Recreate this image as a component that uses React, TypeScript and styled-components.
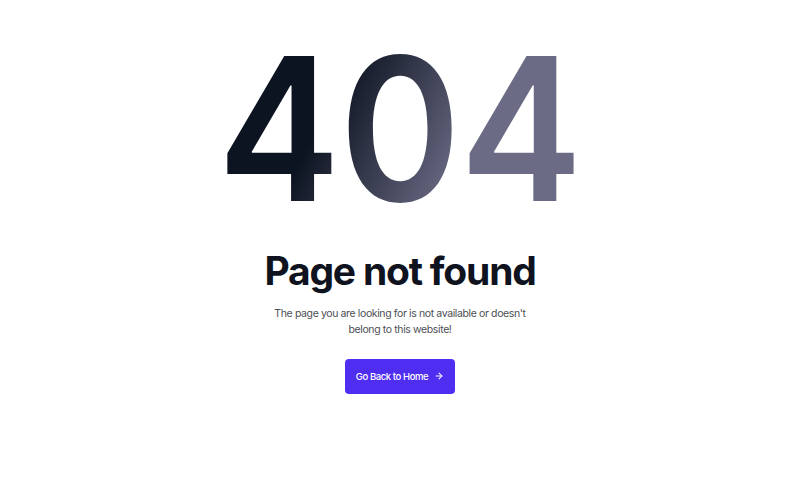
import * as React from 'react'
import styled, { createGlobalStyle } from 'styled-components'

const GlobalStyle = createGlobalStyle`
	html, body {
		margin: 0;
		padding: 0;
		background: #ffffff;
	}
	body {
		font-family: Inter, "Noto Sans", sans-serif;
	}
`

const Page = styled.main`
	width: 800px;
	height: 500px;
	display: flex;
	flex-direction: column;
	align-items: center;
	padding-top: 29px;
	box-sizing: border-box;
`

const Code = styled.h1`
	margin: 0;
	font-size: 199px;
	font-weight: 600;
	line-height: 1;
	letter-spacing: -1px;
	transform: scaleX(0.925);
	background: linear-gradient(118deg, #0d1421 32%, #6b6b85 68%);
	-webkit-background-clip: text;
	background-clip: text;
	color: transparent;
`

const Title = styled.h2`
	margin: 20px 0 0;
	font-size: 39px;
	font-weight: 700;
	letter-spacing: -1.2px;
	color: #0f1320;
	line-height: 1.2;
`

const Text = styled.p`
	margin: 11px 0 0;
	width: 270px;
	text-align: center;
	font-size: 10.5px;
	letter-spacing: -0.38px;
	line-height: 16px;
	color: #4d4f55;
`

const HomeButton = styled.a`
	margin-top: 21px;
	display: flex;
	align-items: center;
	gap: 6px;
	height: 35px;
	padding: 0 11px;
	border-radius: 4px;
	background: #4f2ef2;
	color: #ffffff;
	font-size: 9.5px;
	letter-spacing: -0.4px;
	font-weight: 500;
	text-decoration: none;
	cursor: pointer;
`

const Arrow = () => (
	<svg width="10" height="10" viewBox="0 0 24 24" fill="none" stroke="currentColor" strokeWidth="2.5" strokeLinecap="round" strokeLinejoin="round">
		<path d="M5 12h14" />
		<path d="m12 5 7 7-7 7" />
	</svg>
)

export default function App() {
	return (
		<>
			<GlobalStyle />
			<Page>
				<Code>404</Code>
				<Title>Page not found</Title>
				<Text>The page you are looking for is not available or doesn't belong to this website!</Text>
				<HomeButton href="#">
					Go Back to Home
					<Arrow />
				</HomeButton>
			</Page>
		</>
	)
}
